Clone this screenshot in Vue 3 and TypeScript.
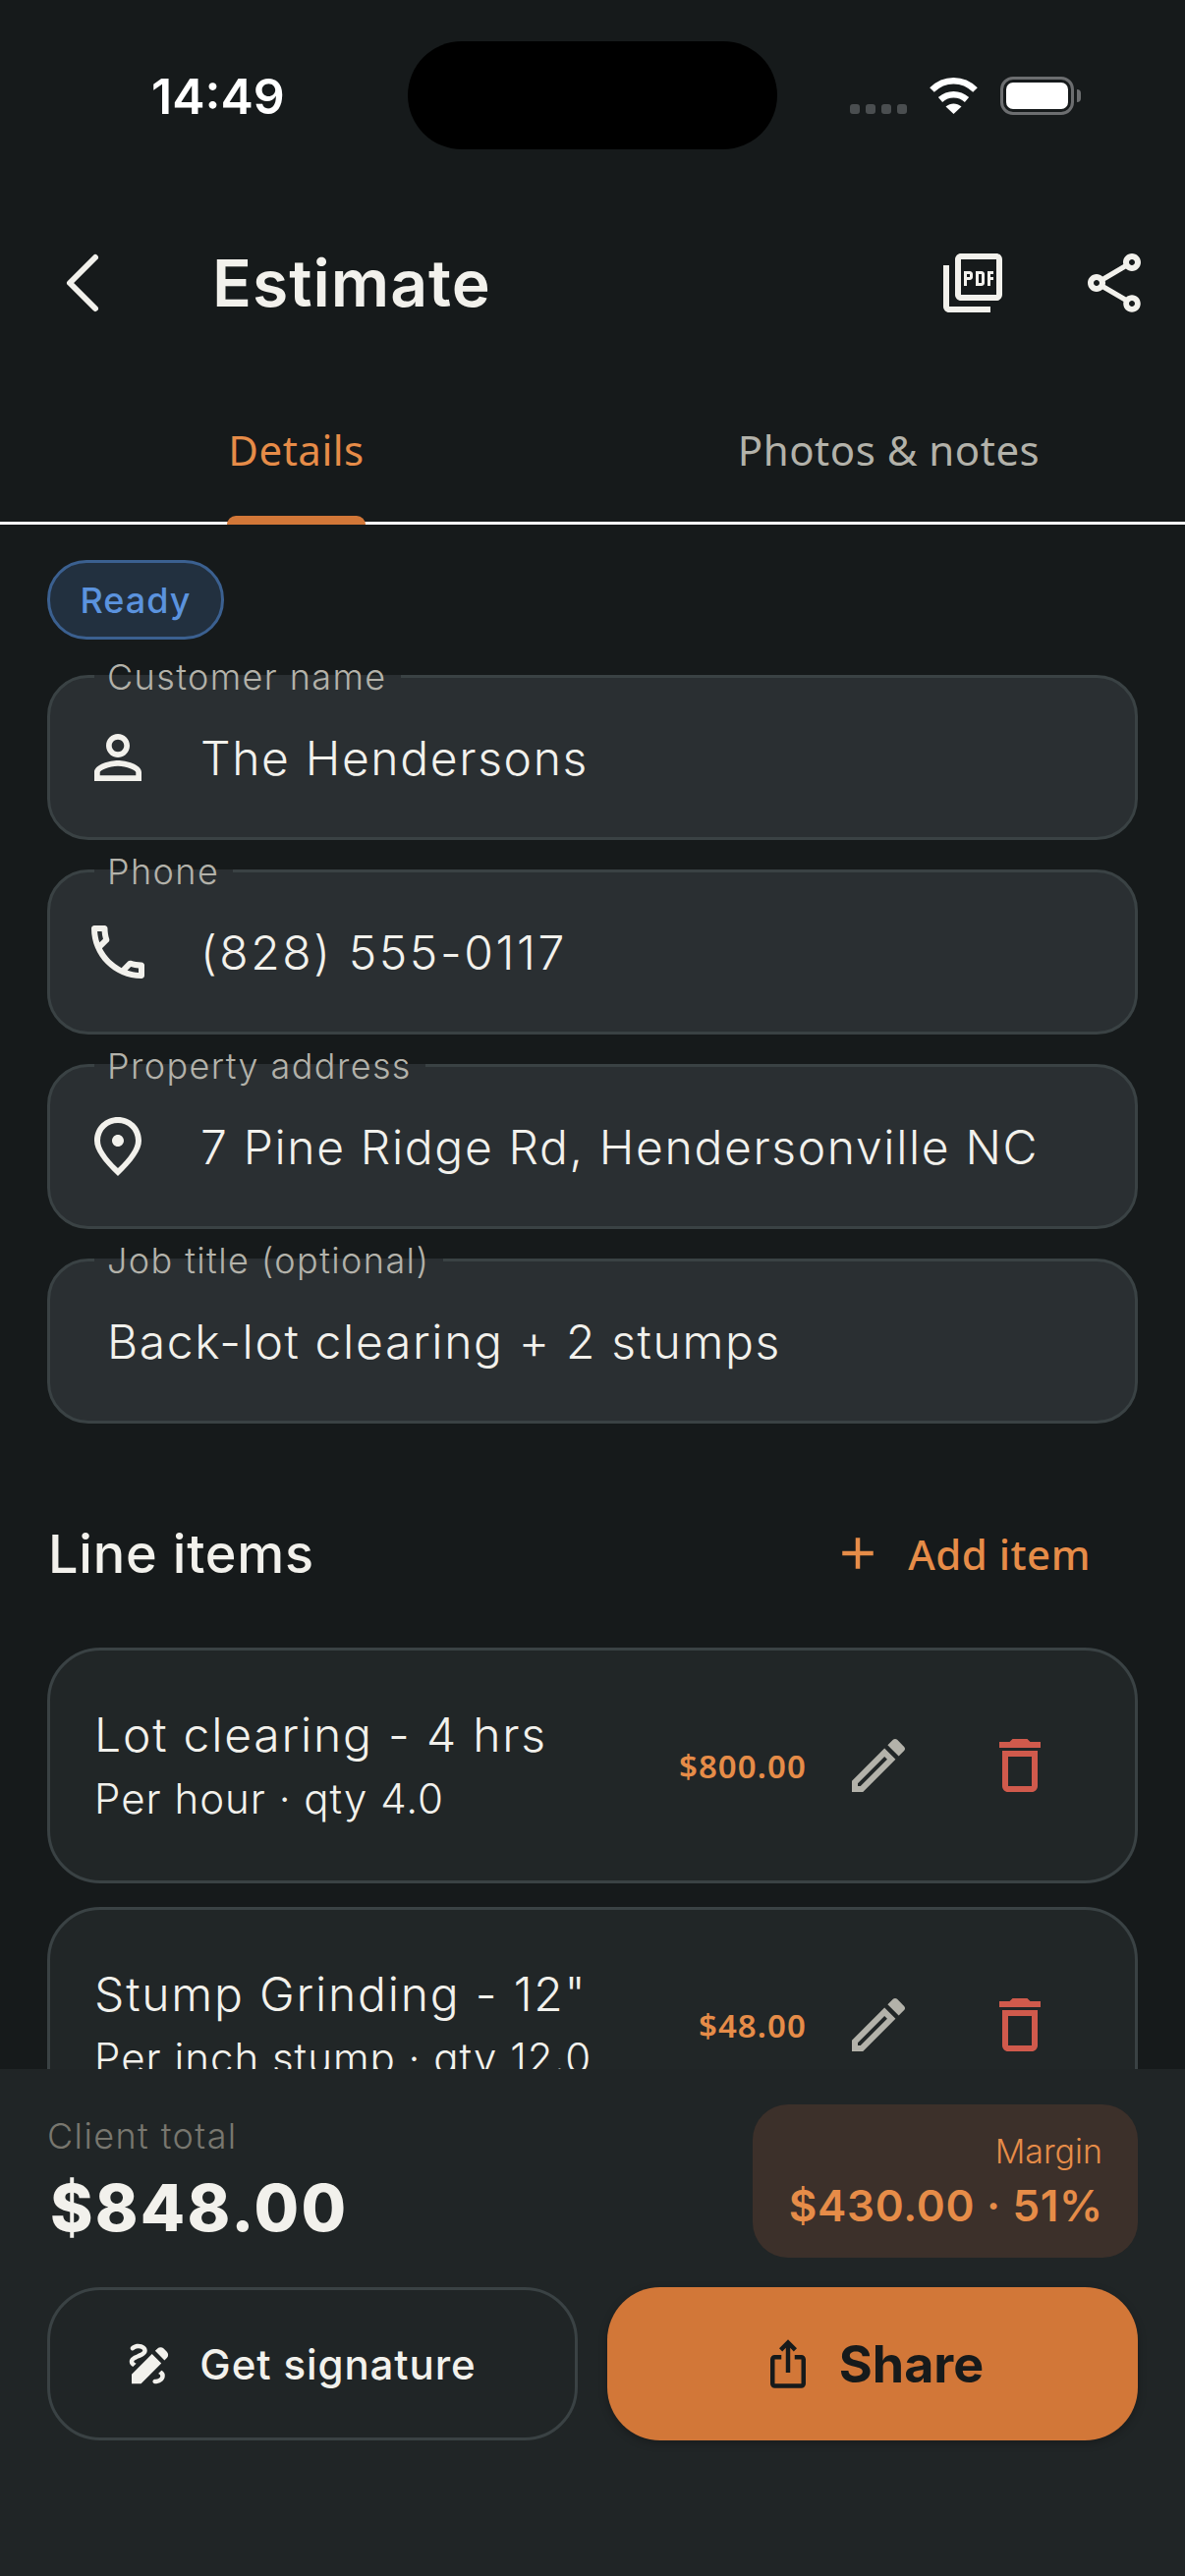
<script setup lang="ts">
interface Field { label: string; value: string; icon?: string; numeric?: boolean }
interface Item { name: string; sub: string; price: string }

const icons = {
  person: 'M12 5.9c1.16 0 2.1.94 2.1 2.1s-.94 2.1-2.1 2.1S9.9 9.16 9.9 8s.94-2.1 2.1-2.1m0 9c2.97 0 6.1 1.46 6.1 2.1v1.1H5.9V17c0-.64 3.13-2.1 6.1-2.1M12 4C9.79 4 8 5.79 8 8s1.79 4 4 4 4-1.79 4-4-1.79-4-4-4zm0 9c-2.67 0-8 1.34-8 4v3h16v-3c0-2.66-5.33-4-8-4z',
  phone: 'M6.54 5c.06.89.21 1.76.45 2.59l-1.2 1.2c-.41-1.2-.67-2.47-.76-3.79h1.51m9.86 12.02c.85.24 1.72.39 2.6.45v1.49c-1.32-.09-2.59-.35-3.8-.75l1.2-1.19M7.5 3H4c-.55 0-1 .45-1 1 0 9.39 7.61 17 17 17 .55 0 1-.45 1-1v-3.49c0-.55-.45-1-1-1-1.24 0-2.45-.2-3.57-.57-.1-.04-.21-.05-.31-.05-.26 0-.51.1-.71.29l-2.2 2.2c-2.83-1.45-5.15-3.76-6.59-6.59l2.2-2.2c.28-.28.36-.67.25-1.02C8.7 6.45 8.5 5.25 8.5 4c0-.55-.45-1-1-1z',
  pin: 'M12 12c1.1 0 2-.9 2-2s-.9-2-2-2-2 .9-2 2 .9 2 2 2zm0-10c-4.2 0-8 3.22-8 8 0 3.18 2.67 6.9 8 12 5.33-5.1 8-8.82 8-12 0-4.78-3.8-8-8-8zm0 17.35C8.1 15.6 6 12.5 6 10c0-3.6 2.8-6 6-6s6 2.4 6 6c0 2.5-2.1 5.6-6 9.35z',
  edit: 'M14.06 9.02l.92.92L5.92 19H5v-.92l9.06-9.06M17.66 3c-.25 0-.51.1-.7.29l-1.83 1.83 3.75 3.75 1.83-1.83c.39-.39.39-1.02 0-1.41l-2.34-2.34c-.2-.2-.45-.29-.71-.29zm-3.6 3.19L3 17.25V21h3.75L17.81 9.94l-3.75-3.75z',
  trash: 'M6 19c0 1.1.9 2 2 2h8c1.1 0 2-.9 2-2V7H6v12zM8 9h8v10H8V9zm7.5-5l-1-1h-5l-1 1H5v2h14V4z',
  pdf: 'M20 2H8c-1.1 0-2 .9-2 2v12c0 1.1.9 2 2 2h12c1.1 0 2-.9 2-2V4c0-1.1-.9-2-2-2zm0 14H8V4h12v12zM4 6H2v14c0 1.1.9 2 2 2h14v-2H4V6zm12 6V9c0-.55-.45-1-1-1h-2v5h2c.55 0 1-.45 1-1zm-2-3h1v3h-1V9zm4 2h1v-1h-1V9h1V8h-2v5h1zm-8 0h1c.55 0 1-.45 1-1V9c0-.55-.45-1-1-1H9v5h1v-2zm0-2h1v1h-1V9z',
  share: 'M18 16.08c-.76 0-1.44.3-1.96.77L8.91 12.7c.05-.23.09-.46.09-.7s-.04-.47-.09-.7l7.05-4.11c.54.5 1.25.81 2.04.81 1.66 0 3-1.34 3-3s-1.34-3-3-3-3 1.34-3 3c0 .24.04.47.09.7L8.04 9.81C7.5 9.31 6.79 9 6 9c-1.66 0-3 1.34-3 3s1.34 3 3 3c.79 0 1.5-.31 2.04-.81l7.12 4.16c-.05.21-.08.43-.08.65 0 1.61 1.31 2.92 2.92 2.92s2.92-1.31 2.92-2.92c0-1.61-1.31-2.92-2.92-2.92zM18 4c.55 0 1 .45 1 1s-.45 1-1 1-1-.45-1-1 .45-1 1-1zM6 13c-.55 0-1-.45-1-1s.45-1 1-1 1 .45 1 1-.45 1-1 1zm12 7.02c-.55 0-1-.45-1-1s.45-1 1-1 1 .45 1 1-.45 1-1 1z',
  draw: 'M18.85 10.39l1.06-1.06c.78-.78.78-2.05 0-2.83L18.5 5.09c-.78-.78-2.05-.78-2.83 0l-1.06 1.06 4.24 4.24zm-5.66-2.83L4 16.76V21h4.24l9.19-9.19-4.24-4.25zM19 17.5c0 2.19-2.54 3.5-4.5 3.5-.55 0-1-.45-1-1s.45-1 1-1c1.54 0 2.5-.79 2.5-1.5 0-.37-.38-.72-.97-1.01l1.48-1.48c1.01.57 1.49 1.32 1.49 1.99zM4.58 13.35C3.61 12.79 3 12.06 3 11c0-1.8 1.89-2.63 3.56-3.36C7.59 7.18 9 6.56 9 6c0-.41-.78-1-2-1-1.26 0-1.8.61-1.83.64-.35.41-.98.46-1.4.12-.41-.34-.49-.95-.15-1.38C3.73 4.24 4.76 3 7 3s4 1.32 4 3c0 1.87-1.93 2.72-3.64 3.47C6.42 9.88 5 10.5 5 11c0 .31.43.6 1.07.86l-1.49 1.49z',
  iosShare: 'M16 5l-1.42 1.42-1.59-1.59V16h-1.98V4.83L9.42 6.42 8 5l4-4 4 4zm4 5v11c0 1.1-.9 2-2 2H6c-1.11 0-2-.9-2-2V10c0-1.11.89-2 2-2h3v2H6v11h12V10h-3V8h3c1.1 0 2 .89 2 2z',
  add: 'M19 13h-6v6h-2v-6H5v-2h6V5h2v6h6v2z'
}

const fields: Field[] = [
  { label: 'Customer name', value: 'The Hendersons', icon: icons.person },
  { label: 'Phone', value: '(828) 555-0117', icon: icons.phone, numeric: true },
  { label: 'Property address', value: '7 Pine Ridge Rd, Hendersonville NC', icon: icons.pin },
  { label: 'Job title (optional)', value: 'Back-lot clearing + 2 stumps' }
]

const items: Item[] = [
  { name: 'Lot clearing - 4 hrs', sub: 'Per hour · qty 4.0', price: '$800.00' },
  { name: 'Stump Grinding - 12"', sub: 'Per inch stump · qty 12.0', price: '$48.00' }
]
</script>

<template>
  <div class="screen">
    <header class="status">
      <span class="time">14:49</span>
      <div class="island"></div>
      <div class="status-right">
        <div class="dots"><i></i><i></i><i></i><i></i></div>
        <svg class="wifi" width="51" height="38" viewBox="0 0 51 38">
          <path d="M3.5 13.5C16 1 35 1 47.5 13.5" fill="none" stroke="#fff" stroke-width="6.5" />
          <path d="M12 23.5C20 16.5 31 16.5 39 23.5" fill="none" stroke="#fff" stroke-width="6.5" />
          <path d="M17.5 30.5C22.5 26.5 28.5 26.5 33.5 30.5L25.5 38Z" fill="#fff" />
        </svg>
        <div class="battery"><div class="battery-fill"></div></div>
        <div class="battery-cap"></div>
      </div>
    </header>

    <div class="appbar">
      <button class="icon-btn back" aria-label="Back">
        <svg width="40" height="64" viewBox="0 0 40 64">
          <path d="M33 6L7 32L33 58" fill="none" stroke="#f2f1ec" stroke-width="6" stroke-linecap="round" stroke-linejoin="round" />
        </svg>
      </button>
      <h1 class="title">Estimate</h1>
      <button class="icon-btn" aria-label="PDF">
        <svg width="72" height="72" viewBox="0 0 24 24" fill="#f2f1ec"><path :d="icons.pdf" /></svg>
      </button>
      <button class="icon-btn" aria-label="Share">
        <svg width="72" height="72" viewBox="0 0 24 24" fill="#f2f1ec"><path :d="icons.share" /></svg>
      </button>
    </div>

    <nav class="tabs">
      <div class="tab active"><span class="tab-label">Details<i class="indicator"></i></span></div>
      <div class="tab"><span class="tab-label">Photos &amp; notes</span></div>
    </nav>

    <main class="body">
      <div class="chip">Ready</div>

      <section class="fields">
        <div v-for="f in fields" :key="f.label" class="field">
          <span class="field-label">{{ f.label }}</span>
          <svg v-if="f.icon" class="field-icon" width="72" height="72" viewBox="0 0 24 24" fill="#f2f1ec"><path :d="f.icon" /></svg>
          <span class="field-value" :class="{ numeric: f.numeric }">{{ f.value }}</span>
        </div>
      </section>

      <div class="items-head">
        <h2 class="items-title">Line items</h2>
        <button class="add">
          <svg width="54" height="54" viewBox="0 0 24 24" fill="#e68c48"><path :d="icons.add" /></svg>
          <span>Add item</span>
        </button>
      </div>

      <section class="items">
        <article v-for="it in items" :key="it.name" class="item">
          <div class="item-text">
            <div class="item-name">{{ it.name }}</div>
            <div class="item-sub">{{ it.sub }}</div>
          </div>
          <span class="price">{{ it.price }}</span>
          <button class="icon-btn" aria-label="Edit">
            <svg width="72" height="72" viewBox="0 0 24 24" fill="#b3b2aa"><path :d="icons.edit" /></svg>
          </button>
          <button class="icon-btn" aria-label="Delete">
            <svg width="72" height="72" viewBox="0 0 24 24" fill="#d05a4c"><path :d="icons.trash" /></svg>
          </button>
        </article>
      </section>
    </main>

    <footer class="bottom">
      <div class="totals">
        <div class="total">
          <div class="total-label">Client total</div>
          <div class="total-value">$848.00</div>
        </div>
        <div class="margin">
          <div class="margin-label">Margin</div>
          <div class="margin-value">$430.00 · 51%</div>
        </div>
      </div>
      <div class="actions">
        <button class="action sign">
          <svg width="54" height="54" viewBox="0 0 24 24" fill="#f2f1ec"><path :d="icons.draw" /></svg>
          <span>Get signature</span>
        </button>
        <button class="action primary">
          <svg width="54" height="54" viewBox="0 0 24 24" fill="#161a1b"><path :d="icons.iosShare" /></svg>
          <span>Share</span>
        </button>
      </div>
    </footer>
  </div>
</template>

<style scoped>
.screen {
  width: 1206px;
  height: 2622px;
  display: flex;
  flex-direction: column;
  overflow: hidden;
  background: #161a1b;
  color: #f2f1ec;
  font-family: Inter, "Noto Sans", sans-serif;
}
button {
  background: none;
  border: 0;
  padding: 0;
  color: inherit;
  font-family: inherit;
}
h1, h2 { margin: 0; }

.status {
  height: 180px;
  flex: none;
  display: flex;
  position: relative;
}
.time {
  position: absolute;
  left: 154px;
  top: 68px;
  font-size: 50px;
  line-height: 60px;
  font-weight: 600;
  color: #fff;
}
.island {
  position: absolute;
  left: 415px;
  top: 42px;
  width: 376px;
  height: 110px;
  border-radius: 55px;
  background: #000;
}
.status-right {
  position: absolute;
  left: 865px;
  top: 78px;
  display: flex;
  align-items: flex-start;
}
.dots {
  display: flex;
  gap: 6px;
  margin-top: 28px;
  margin-right: 22px;
}
.dots i {
  width: 10px;
  height: 10px;
  border-radius: 3px;
  background: #4a4e50;
}
.wifi { margin-right: 22px; }
.battery {
  width: 75px;
  height: 39px;
  box-sizing: border-box;
  border: 3px solid #6c6e70;
  border-radius: 13px;
  padding: 3px;
}
.battery-fill {
  height: 100%;
  background: #fff;
  border-radius: 7px;
}
.battery-cap {
  width: 4px;
  height: 13px;
  margin: 13px 0 0 3px;
  background: #6c6e70;
  border-radius: 0 4px 4px 0;
}

.appbar {
  height: 216px;
  flex: none;
  display: flex;
  align-items: center;
}
.icon-btn {
  width: 144px;
  height: 144px;
  flex: none;
  display: flex;
  align-items: center;
  justify-content: center;
}
.back { width: 216px; justify-content: flex-start; padding-left: 64px; box-sizing: border-box; }
.title {
  flex: 1;
  font-size: 66px;
  font-weight: 600;
  letter-spacing: 1px;
  line-height: 80px;
}

.tabs {
  height: 138px;
  flex: none;
  display: flex;
  box-sizing: border-box;
  border-bottom: 3px solid #fff;
}
.tab {
  flex: 1;
  display: flex;
  justify-content: center;
  color: #b3b2aa;
  font-family: "Noto Sans", sans-serif;
  font-size: 42px;
  font-weight: 400;
  letter-spacing: 0.5px;
  line-height: 124px;
}
.tab.active { color: #e68c48; }
.tab-label { position: relative; height: 135px; padding: 0 1px; }
.indicator {
  position: absolute;
  left: 0;
  right: 0;
  bottom: -3px;
  height: 9px;
  background: #d27738;
  border-radius: 9px 9px 0 0;
}

.body {
  flex: 1;
  min-height: 0;
  overflow: hidden;
  padding: 36px 48px 0;
}
.chip {
  width: 180px;
  height: 81px;
  box-sizing: border-box;
  border: 3px solid #3b6090;
  border-radius: 40px;
  background: #22303f;
  color: #5b93de;
  font-size: 36px;
  font-weight: 500;
  line-height: 77px;
  text-align: center;
  letter-spacing: 1px;
}

.fields {
  display: flex;
  flex-direction: column;
  gap: 30px;
  margin-top: 36px;
}
.field {
  position: relative;
  height: 168px;
  box-sizing: border-box;
  display: flex;
  align-items: center;
  padding-left: 58px;
  background: #2a2f32;
  border: 3px solid #3a4244;
  border-radius: 42px;
}
.field-label {
  position: absolute;
  left: 45px;
  top: -22px;
  padding: 0 14px 0 13px;
  font-size: 36px;
  line-height: 42px;
  font-weight: 300;
  letter-spacing: 1.4px;
  color: #b3b2aa;
  background: linear-gradient(#2a2f32, #2a2f32) 0 19px / 100% 3px no-repeat;
}
.field-icon {
  margin-left: -25px;
  margin-right: 48px;
  flex: none;
}
.field-value {
  font-size: 48px;
  font-weight: 300;
  letter-spacing: 1.65px;
  white-space: nowrap;
}
.field-value.numeric { letter-spacing: 2.6px; }

.items-head {
  display: flex;
  align-items: center;
  justify-content: space-between;
  height: 90px;
  margin-top: 87px;
}
.items-title {
  padding-left: 1px;
  font-size: 54px;
  font-weight: 500;
  letter-spacing: 0.8px;
}
.add {
  display: flex;
  align-items: center;
  gap: 24px;
  padding-right: 48px;
  color: #e68c48;
  font-family: "Noto Sans", sans-serif;
  font-size: 42px;
  font-weight: 500;
  letter-spacing: 0.5px;
}

.items {
  display: flex;
  flex-direction: column;
  gap: 24px;
  margin-top: 51px;
}
.item {
  height: 240px;
  flex: none;
  box-sizing: border-box;
  display: flex;
  align-items: center;
  padding: 0 45px;
  background: #212627;
  border: 3px solid #3a4244;
  border-radius: 54px;
}
.item-text { flex: 1; min-width: 0; }
.item-name {
  font-size: 48px;
  font-weight: 300;
  letter-spacing: 1.8px;
  line-height: 66px;
}
.item-sub {
  margin-top: 2px;
  font-size: 42px;
  font-weight: 300;
  letter-spacing: 1px;
  line-height: 60px;
}
.price {
  font-family: "Noto Sans", sans-serif;
  font-size: 33px;
  font-weight: 600;
  letter-spacing: 1.1px;
  color: #e68c48;
  margin-right: 1px;
}

.bottom {
  height: 516px;
  flex: none;
  box-sizing: border-box;
  padding: 36px 48px 0;
  background: #202526;
}
.totals {
  display: flex;
  justify-content: space-between;
  height: 156px;
}
.total { padding-top: 2px; }
.total-label {
  font-size: 36px;
  font-weight: 300;
  letter-spacing: 1.4px;
  line-height: 60px;
  color: #78776f;
}
.total-value {
  margin: 1px 0 0 3px;
  font-size: 66px;
  font-weight: 800;
  letter-spacing: 2.2px;
  line-height: 84px;
}
.margin {
  width: 392px;
  box-sizing: border-box;
  padding: 26px 36px 0 0;
  background: #3c302a;
  border-radius: 36px;
  text-align: right;
  color: #e68c48;
}
.margin-label {
  font-size: 34px;
  font-weight: 300;
  line-height: 44px;
}
.margin-value {
  margin: 2px -1px 0 0;
  font-size: 44px;
  font-weight: 600;
  letter-spacing: 0.7px;
  line-height: 62px;
}
.actions {
  display: grid;
  grid-template-columns: 1fr 1fr;
  gap: 30px;
  margin-top: 30px;
}
.action {
  height: 156px;
  box-sizing: border-box;
  display: flex;
  align-items: center;
  justify-content: center;
  border-radius: 54px;
}
.sign {
  gap: 24px;
  padding-right: 26px;
  border: 3px solid #3a4244;
  font-size: 42px;
  font-weight: 500;
  letter-spacing: 0.9px;
}
.primary {
  gap: 25px;
  background: #d27738;
  color: #161a1b;
  font-size: 52px;
  font-weight: 700;
  box-shadow: 0 3px 9px rgba(0, 0, 0, 0.25);
}
</style>
